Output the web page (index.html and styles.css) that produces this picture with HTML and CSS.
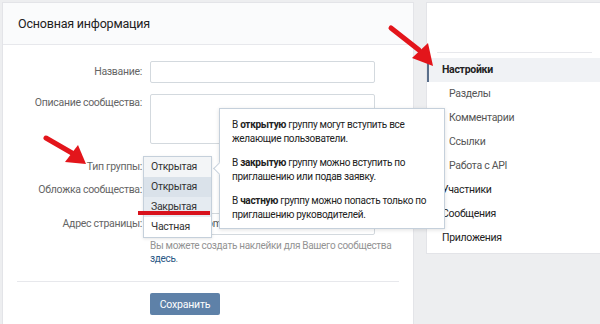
FILE: index.html
```html
<!DOCTYPE html>
<html lang="ru">
  <head>
    <meta charset="UTF-8" />
    <title>Управление сообществом</title>
    <link rel="stylesheet" href="styles.css">
  </head>
  <body>
    <div class="page">
      <div class="card main">
        <div class="card-head">Основная информация</div>

        <div class="form">
          <div class="row row-name">
            <label class="label">Название:</label>
            <div class="field"><div class="input"></div></div>
          </div>

          <div class="row row-desc">
            <label class="label">Описание сообщества:</label>
            <div class="field"><div class="input textarea"></div></div>
          </div>

          <div class="row row-type">
            <label class="label">Тип группы:</label>
            <div class="field">
              <div class="dropdown">
                <div class="option current">Открытая</div>
                <div class="option hover">Открытая</div>
                <div class="option marked">Закрытая</div>
                <div class="option">Частная</div>
              </div>
            </div>
          </div>

          <div class="row row-cover">
            <label class="label">Обложка сообщества:</label>
            <div class="field"></div>
          </div>

          <div class="row row-addr">
            <label class="label">Адрес страницы:</label>
            <div class="field"><div class="input">https://vk.com/</div></div>
          </div>

          <div class="row row-hint">
            <div></div>
            <div class="hint">Вы можете создать наклейки для Вашего сообщества <a class="link">здесь</a>.</div>
          </div>
        </div>

        <div class="separator"></div>

        <div class="row row-save">
          <div></div>
          <div><button class="button">Сохранить</button></div>
        </div>
      </div>

      <div class="card side">
        <div class="side-top"></div>
        <ul class="menu">
          <li class="menu-item active">Настройки</li>
          <li class="menu-item sub">Разделы</li>
          <li class="menu-item sub">Комментарии</li>
          <li class="menu-item sub">Ссылки</li>
          <li class="menu-item sub">Работа с API</li>
          <li class="menu-item">Участники</li>
          <li class="menu-item">Сообщения</li>
          <li class="menu-item">Приложения</li>
        </ul>
      </div>

      <!-- подсказка к типу группы -->
      <div class="tooltip">
        <p>В <b>открытую</b> группу могут вступить все желающие пользователи.</p>
        <p>В <b>закрытую</b> группу можно вступить по приглашению или подав заявку.</p>
        <p>В <b>частную</b> группу можно попасть только по приглашению руководителей.</p>
      </div>

      <!-- красные пометки поверх скриншота -->
      <svg class="marks" width="600" height="324" viewBox="0 0 600 324">
        <line x1="46" y1="138" x2="72" y2="153" stroke="#e3151b" stroke-width="5" stroke-linecap="round" />
        <polygon points="65,162 86,164 78,145" fill="#e3151b" />
        <line x1="391" y1="28" x2="419" y2="50" stroke="#e3151b" stroke-width="5" stroke-linecap="round" />
        <polygon points="412,58 433,66 428,43" fill="#e3151b" />
        <rect x="138" y="211" width="72" height="4" fill="#d8121c" />
      </svg>
    </div>
  </body>
</html>
```

FILE: styles.css
```css
body {
  margin: 0;
  background: #edeef0;
  font-family: Roboto, "Open Sans", Arial, sans-serif;
  font-size: 10.5px;
  letter-spacing: -0.3px;
  color: #222;
  overflow: hidden;
}

.page {
  position: relative;
  width: 600px;
  height: 324px;
  display: flex;
  gap: 14px;
  padding: 3px 0 0 3px;
  box-sizing: border-box;
  overflow: hidden;
}

.card {
  background: #fff;
  box-shadow: 0 0 0 1px #e3e4e8;
  flex-shrink: 0;
}

.main {
  width: 410px;
  height: 340px;
}

.card-head {
  height: 41px;
  line-height: 41px;
  padding-left: 15px;
  background: #fafbfc;
  border-bottom: 1px solid #e7e8ec;
  font-size: 12.5px;
  letter-spacing: -0.2px;
  color: #222;
}

.form {
  padding-top: 16px;
}

.row {
  display: grid;
  grid-template-columns: 139px 225px;
  column-gap: 8px;
}

.label {
  text-align: right;
  color: #656565;
  line-height: 22px;
}

.field {
  position: relative;
  height: 22px;
}

.input {
  height: 22px;
  box-sizing: border-box;
  border: 1px solid #d3d9de;
  border-radius: 2px;
  padding: 0 7px;
  line-height: 20px;
  color: #555;
}

.row-desc {
  margin-top: 11px;
}

.row-desc .label {
  line-height: 18px;
}

.row-desc .field,
.textarea {
  height: 50px;
}

.row-type {
  margin-top: 12px;
}

.row-type .label,
.row-type .field {
  line-height: 21px;
  height: 21px;
}

.row-cover {
  margin-top: 2px;
}

.row-addr {
  margin-top: 12px;
}

.row-hint {
  margin-top: 4px;
  grid-template-columns: 139px 250px;
}

.hint {
  color: #939393;
  font-size: 10px;
  line-height: 13px;
}

.link {
  color: #2a5885;
}

.separator {
  margin: 16px 14px 0;
  border-top: 1px solid #e7e8ec;
}

.row-save {
  margin-top: 11px;
}

.button {
  width: 70px;
  height: 22px;
  border: none;
  border-radius: 2px;
  background: #5e81a8;
  color: #fff;
  font-family: inherit;
  font-size: 10.5px;
  letter-spacing: -0.2px;
  padding: 0;
}

/* выпадающий список */
.dropdown {
  position: absolute;
  top: 0;
  left: -7px;
  width: 67px;
  background: #fff;
  border: 1px solid #c5d0db;
  box-shadow: 0 1px 3px rgba(0, 0, 0, 0.1);
  z-index: 2;
}

.option {
  height: 20px;
  line-height: 20px;
  padding-left: 7px;
  color: #333;
}

.option.current {
  background: #f3f5f7;
}

.option.hover {
  background: #dae2ea;
}

.option.marked {
  background: #e5ebf1;
}

/* правая колонка */
.side {
  width: 175px;
  height: 250px;
}

.side-top {
  height: 49px;
  margin: 0 10px;
  border-bottom: 1px solid #e7e8ec;
}

.menu {
  list-style: none;
  margin: 5px 0 0;
  padding: 0;
}

.menu-item {
  height: 24px;
  line-height: 24px;
  padding-left: 15px;
  color: #222;
}

.menu-item.sub {
  padding-left: 22px;
  color: #555;
}

.menu-item.active {
  background: #f0f2f5;
  border-left: 2px solid #5a6f8a;
  padding-left: 13px;
  font-weight: bold;
}

/* подсказка */
.tooltip {
  position: absolute;
  left: 219px;
  top: 108px;
  width: 226px;
  height: 121px;
  box-sizing: border-box;
  padding: 9px 4px 0 12px;
  background: #fff;
  border: 1px solid #c5d0db;
  box-shadow: 0 1px 4px rgba(0, 0, 0, 0.12);
  z-index: 3;
  font-size: 10px;
  line-height: 14px;
  color: #222;
}

.tooltip::before {
  content: "";
  position: absolute;
  left: -5px;
  top: 55px;
  width: 8px;
  height: 8px;
  background: #fff;
  border-left: 1px solid #c5d0db;
  border-bottom: 1px solid #c5d0db;
  transform: rotate(45deg);
}

.tooltip p {
  margin: 0 0 10px;
}

.marks {
  position: absolute;
  left: 0;
  top: 0;
  z-index: 4;
}
```
